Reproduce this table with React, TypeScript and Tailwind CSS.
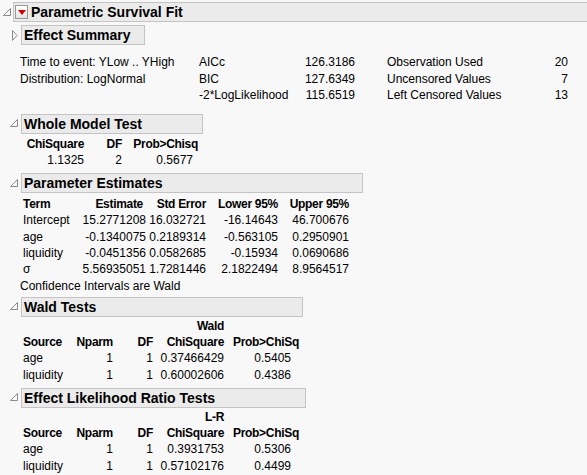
import React from 'react'

const font = "font-['Liberation_Sans',Arial,sans-serif]"

function OpenTri() {
  return (
    <svg width="9" height="9" viewBox="0 0 9 9" className="block">
      <polygon points="7.5,0.5 7.5,7.5 0.5,7.5" fill="#fafafa" stroke="#8a8a8a" strokeWidth="1" />
    </svg>
  )
}

function ClosedTri() {
  return (
    <svg width="6" height="11" viewBox="0 0 6 11" className="block">
      <polygon points="0.5,0.5 5,5.5 0.5,10.5" fill="#fafafa" stroke="#8a8a8a" strokeWidth="1" />
    </svg>
  )
}

function OutlineHead({ title, width, open = true }: { title: string; width: string; open?: boolean }) {
  return (
    <div className="flex h-[20px] items-center">
      <div className="flex w-[21px] justify-center pl-[8px]">{open ? <OpenTri /> : <ClosedTri />}</div>
      <div
        className={`${width} flex h-[20px] items-center border border-[#c4c4c4] bg-[#ebebeb] pl-[2px] text-[14px] font-bold leading-none text-black`}
      >
        {title}
      </div>
    </div>
  )
}

type Row = string[]

function Table({
  cols,
  ml,
  top,
  head,
  rows,
  align,
  vpad,
}: {
  cols: string
  ml: string
  top?: string[]
  head: Row
  rows: Row[]
  align: ('l' | 'r')[]
  vpad?: string[]
}) {
  const cell = (i: number) => (align[i] === 'l' ? 'text-left' : 'text-right')
  return (
    <div className={`grid ${cols} ${ml} text-[12px] leading-[16.25px] text-black`}>
      {top &&
        top.map((t, i) => (
          <div key={'t' + i} className={`${cell(i)} font-bold tracking-[-0.3px]`}>
            {t}
          </div>
        ))}
      {head.map((h, i) => (
        <div key={'h' + i} className={`${cell(i)} font-bold tracking-[-0.3px] whitespace-nowrap`}>
          {h}
        </div>
      ))}
      {rows.map((r, ri) =>
        r.map((c, i) => (
          <div key={ri + '-' + i} className={`${cell(i)} ${vpad ? vpad[i] : ''} whitespace-nowrap`}>
            {c}
          </div>
        ))
      )}
    </div>
  )
}

export default function App() {
  return (
    <div className={`${font} h-[475px] w-[587px] overflow-hidden bg-[#f8f8f8] pt-[2px] text-black`}>
      {/* top level outline */}
      <div className="flex h-[20px] items-center">
        <div className="flex w-[13px] justify-center pl-[1px]">
          <OpenTri />
        </div>
        <div className="flex h-[20px] flex-1 items-center border border-r-0 border-[#c4c4c4] bg-[#ebebeb]">
          <div className="ml-[1px] flex h-[14px] w-[13px] items-center justify-center border border-[#9a9a9a] bg-gradient-to-b from-white to-[#e4e4e4]">
            <svg width="8" height="5" viewBox="0 0 8 5" className="block">
              <polygon points="0,0 8,0 4,5" fill="#d40000" />
            </svg>
          </div>
          <span className="ml-[3px] text-[14px] font-bold leading-none">Parametric Survival Fit</span>
        </div>
      </div>

      <div className="mt-[3px]">
        <OutlineHead title="Effect Summary" width="w-[124px]" open={false} />
      </div>

      {/* summary block */}
      <div className="ml-[20px] mt-[9px] grid grid-cols-[179px_100px_56px_32px_150px_31px] text-[12px] leading-[16.5px]">
        <div>Time to event: YLow .. YHigh</div>
        <div>AICc</div>
        <div className="text-right">126.3186</div>
        <div />
        <div>Observation Used</div>
        <div className="text-right">20</div>

        <div>Distribution: LogNormal</div>
        <div>BIC</div>
        <div className="text-right">127.6349</div>
        <div />
        <div>Uncensored Values</div>
        <div className="text-right">7</div>

        <div />
        <div>-2*LogLikelihood</div>
        <div className="text-right">115.6519</div>
        <div />
        <div>Left Censored Values</div>
        <div className="text-right">13</div>
      </div>

      <div className="mt-[10px]">
        <OutlineHead title="Whole Model Test" width="w-[182px]" />
      </div>
      <div className="mt-[2px]">
        <Table
          cols="grid-cols-[60px_38px_76px]"
          ml="ml-[24px]"
          head={['ChiSquare', 'DF', 'Prob>Chisq']}
          rows={[['1.1325', '2', '0.5677']]}
          align={['r', 'r', 'r']}
          vpad={['', '', 'pr-[5px]']}
        />
      </div>

      <div className="mt-[5px]">
        <OutlineHead title="Parameter Estimates" width="w-[342px]" />
      </div>
      <div className="mt-[3px]">
        <Table
          cols="grid-cols-[57px_63px_63px_72px_71px]"
          ml="ml-[23px]"
          head={['Term', 'Estimate', 'Std Error', 'Lower 95%', 'Upper 95%']}
          rows={[
            ['Intercept', '15.2771208', '16.032721', '-16.14643', '46.700676'],
            ['age', '-0.1340075', '0.2189314', '-0.563105', '0.2950901'],
            ['liquidity', '-0.0451356', '0.0582685', '-0.15934', '0.0690686'],
            ['\u03c3', '5.56935051', '1.7281446', '2.1822494', '8.9564517'],
          ]}
          align={['l', 'r', 'r', 'r', 'r']}
          vpad={['', '-mr-[3px]', '', '', '']}
        />
      </div>
      <div className="ml-[20px] mt-[1px] text-[12px] leading-[16.5px]">Confidence Intervals are Wald</div>

      <div className="mt-[2px]">
        <OutlineHead title="Wald Tests" width="w-[282px]" />
      </div>
      <div className="mt-[1px]">
        <Table
          cols="grid-cols-[50px_40px_40px_71px_75px]"
          ml="ml-[23px]"
          top={['', '', '', 'Wald', '']}
          head={['Source', 'Nparm', 'DF', 'ChiSquare', 'Prob>ChiSq']}
          rows={[
            ['age', '1', '1', '0.37466429', '0.5405'],
            ['liquidity', '1', '1', '0.60002606', '0.4386'],
          ]}
          align={['l', 'r', 'r', 'r', 'r']}
          vpad={['', '', '', '', 'pr-[8px]']}
        />
      </div>

      <div className="mt-[5px]">
        <OutlineHead title="Effect Likelihood Ratio Tests" width="w-[285px]" />
      </div>
      <div className="mt-[1px]">
        <Table
          cols="grid-cols-[50px_40px_40px_71px_75px]"
          ml="ml-[23px]"
          top={['', '', '', 'L-R', '']}
          head={['Source', 'Nparm', 'DF', 'ChiSquare', 'Prob>ChiSq']}
          rows={[
            ['age', '1', '1', '0.3931753', '0.5306'],
            ['liquidity', '1', '1', '0.57102176', '0.4499'],
          ]}
          align={['l', 'r', 'r', 'r', 'r']}
          vpad={['', '', '', '', 'pr-[8px]']}
        />
      </div>
    </div>
  )
}
